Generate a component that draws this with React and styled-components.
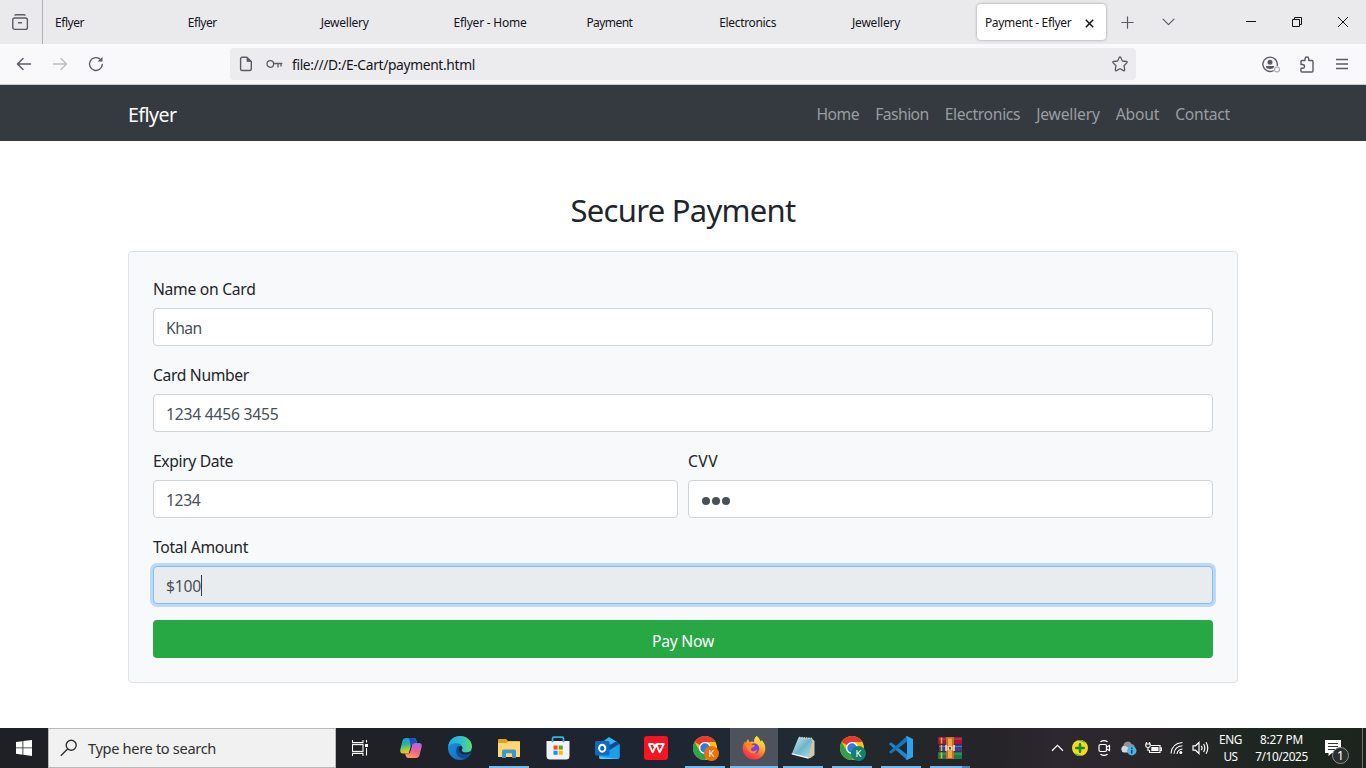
import React, { useLayoutEffect, useRef, useState } from "react";
import styled, { createGlobalStyle } from "styled-components";

const GlobalStyle = createGlobalStyle`
  *, *::before, *::after { box-sizing: border-box; }
  html, body { margin: 0; padding: 0; overflow: hidden; }
  body { background: #fff; font-family: "Noto Sans", "Open Sans", sans-serif; color: #212529; }
  svg { display: block; flex: none; }
`;

const Run = styled.span`
  display: inline-block;
  white-space: nowrap;
  flex: none;
`;

/* Tracks its text so that the run takes the given advance width. */
function Text({ w, children }) {
  const ref = useRef(null);
  const [spacing, setSpacing] = useState(0);
  useLayoutEffect(() => {
    const natural = ref.current.getBoundingClientRect().width;
    setSpacing((w - natural) / children.length);
  }, []);
  return (
    <Run ref={ref} style={{ letterSpacing: `${spacing}px` }}>
      {children}
    </Run>
  );
}

const Screen = styled.div`
  width: 1366px;
  height: 768px;
  display: flex;
  flex-direction: column;
  background: #fff;
`;

/* ---------- browser chrome ---------- */
const TabBar = styled.div`
  height: 44px;
  display: flex;
  align-items: center;
  background: #eaeaed;
  color: #15141a;
  font-size: 12px;
`;
const FirefoxView = styled.div`
  width: 43px;
  height: 44px;
  padding: 14px 0 0 12px;
  border-right: 1px solid #b1b1b5;
`;
const Tabs = styled.div`
  display: flex;
  align-items: center;
  padding-left: 4px;
  line-height: 16px;
`;
const Tab = styled.div`
  width: 132.85px;
  padding-left: 8px;
  padding-top: 2px;
`;
const ActiveTab = styled.div`
  width: 129px;
  height: 36px;
  display: flex;
  align-items: center;
  justify-content: space-between;
  padding: 2px 12px 0 8px;
  border-radius: 4px;
  background: #fff;
  box-shadow: 0 0 3px rgba(0, 0, 0, 0.35);
`;
const TabActions = styled.div`
  display: flex;
  align-items: center;
  gap: 28px;
  padding-left: 15px;
`;
const WindowButtons = styled.div`
  display: flex;
  align-items: center;
  gap: 34px;
  margin-left: auto;
  padding-right: 17px;
`;
const ToolBar = styled.div`
  height: 41px;
  display: flex;
  align-items: center;
  background: #f9f9fb;
  border-bottom: 1px solid #cccccf;
`;
const NavButtons = styled.div`
  width: 230px;
  display: flex;
  align-items: center;
  gap: 20px;
  padding-left: 16px;
`;
const AddressBar = styled.div`
  width: 906px;
  height: 32px;
  display: flex;
  align-items: center;
  padding: 0 8px;
  border-radius: 4px;
  background: #ececee;
  color: #15141a;
  font-size: 13.8px;
`;
const Url = styled.div`
  padding-top: 1px;
`;
const KeySlot = styled.div`
  padding: 0 9px 0 12px;
`;
const StarSlot = styled.div`
  margin-left: auto;
`;
const ToolActions = styled.div`
  display: flex;
  align-items: center;
  gap: 19px;
  margin-left: auto;
  padding-right: 16px;
`;

/* ---------- page ---------- */
const SiteNav = styled.nav`
  height: 56px;
  display: flex;
  align-items: center;
  justify-content: space-between;
  padding: 3px 136px 0 128px;
  background: #343a40;
`;
const Brand = styled.div`
  color: #fff;
  font-size: 19.6px;
  line-height: 30px;
`;
const Links = styled.div`
  display: flex;
  gap: 16px;
  padding-bottom: 2px;
  color: #9a9da0;
  font-size: 15.7px;
  line-height: 24px;
`;
const Main = styled.main`
  flex: 1;
  padding: 48px 128px 0;
  font-size: 15.7px;
`;
const Title = styled.h2`
  margin: 0 0 22px;
  height: 40px;
  font-size: 31px;
  font-weight: 400;
  line-height: 42px;
  text-align: center;
`;
const Card = styled.form`
  height: 432px;
  padding: 24px;
  border: 1px solid #dee2e6;
  border-radius: 4px;
  background: #f8f9fa;
`;
const FormGroup = styled.div`
  flex: 1;
  margin-bottom: 16px;
`;
const FormRow = styled.div`
  display: flex;
  gap: 10px;
`;
const Label = styled.div`
  height: 24px;
  margin-bottom: 8px;
  padding-top: 1px;
  line-height: 25px;
`;
const Field = styled.div`
  height: 38px;
  display: flex;
  align-items: center;
  padding: 1px 12px 0;
  border: 1px solid ${(p) => (p.$focused ? "#80bdff" : "#ced4da")};
  border-radius: 4px;
  background: ${(p) => (p.$focused ? "#e9ecef" : "#fff")};
  box-shadow: ${(p) => (p.$focused ? "0 0 0 3px rgba(0, 123, 255, 0.25)" : "none")};
  color: #495057;
  line-height: 24px;
`;
const Caret = styled.span`
  width: 1px;
  height: 21px;
  background: #343a40;
`;
const Dots = styled.div`
  display: flex;
  gap: 2px;
  padding: 3px 0 0 1px;
`;
const Dot = styled.span`
  width: 8px;
  height: 8px;
  border-radius: 50%;
  background: #495057;
`;
const PayButton = styled.div`
  height: 38px;
  padding-top: 9px;
  border-radius: 4px;
  background: #28a745;
  color: #fff;
  line-height: 24px;
  text-align: center;
`;

/* ---------- taskbar ---------- */
const TaskBar = styled.div`
  height: 40px;
  display: flex;
  background: linear-gradient(90deg, #1e2025 0, #1f2126 400px, #1d2533 640px, #212a33 780px, #23272a 900px, #262429 1000px, #2d2730 1060px, #29262a 1150px, #1e2621 1260px, #1c241d 1366px);
  color: #fff;
`;
const Start = styled.div`
  width: 48px;
  padding: 12px 16px;
`;
const Search = styled.div`
  width: 288px;
  display: flex;
  align-items: center;
  gap: 10px;
  padding-left: 11px;
  border: 1px solid #b9b9b9;
  background: #f1f1f1;
  color: #303030;
  font-size: 14.6px;
`;
const Apps = styled.div`
  display: flex;
  gap: 1px;
`;
const AppButton = styled.div`
  width: 48px;
  height: 40px;
  display: flex;
  flex-direction: column;
  align-items: center;
  justify-content: space-between;
  margin-left: ${(p) => (p.$first ? "2px" : "0")};
  padding-top: ${(p) => p.$top || 8}px;
  background: ${(p) => (p.$active ? "#4d525c" : "transparent")};
`;
const Underline = styled.div`
  width: ${(p) => (p.$wide ? 48 : 40)}px;
  height: 2px;
  background: ${(p) => (p.$split ? "linear-gradient(90deg, #76b9ed 32px, #4f83ad 32px)" : "#76b9ed")};
`;
const Tray = styled.div`
  display: flex;
  align-items: center;
  margin-left: auto;
  padding-right: 11px;
`;
const TrayIcons = styled.div`
  display: flex;
  align-items: center;
  gap: 8px;
  margin-right: 9px;
`;
const TrayText = styled.div`
  width: ${(p) => p.$w}px;
  display: flex;
  flex-direction: column;
  align-items: center;
  margin-right: ${(p) => p.$gap}px;
  padding-bottom: 1px;
  font-size: 11.8px;
  line-height: 17px;
`;
const Notify = styled.div`
  position: relative;
  width: 27px;
  height: 27px;
  padding: 5px 0 0 1px;
`;
const Count = styled.span`
  position: absolute;
  left: 8px;
  top: 12px;
  width: 17px;
  height: 17px;
  border: 1px solid #8d918e;
  border-radius: 50%;
  background: #2b302c;
  font-size: 13px;
  line-height: 15px;
  text-align: center;
`;
const Peek = styled.div`
  width: 4px;
  border-left: 1px solid #6f7370;
`;

const line = { fill: "none", stroke: "#5b5b66", strokeWidth: 1.4, strokeLinecap: "round", strokeLinejoin: "round" };

const ViewIcon = () => (
  <svg width="17" height="17" viewBox="0 0 17 17" {...line}>
    <path d="M3 1.2Q3.300 .8 4 .8H12Q12.700 .8 13 1.200" />
    <rect x=".8" y="4" width="14.600" height="11.400" rx="2" />
    <path d="M6.500 8.700H9.500" />
  </svg>
);
const BackIcon = () => (
  <svg width="16" height="16" viewBox="0 0 16 16" {...line} strokeWidth="1.5"><path d="M14.500 8H1.500M7 2.500L1.500 8L7 13.500" /></svg>
);
const ForwardIcon = () => (
  <svg width="16" height="16" viewBox="0 0 16 16" {...line} stroke="#bcbcc2" strokeWidth="1.5"><path d="M1.500 8H14.500M9 2.500L14.500 8L9 13.500" /></svg>
);
const ReloadIcon = () => (
  <svg width="16" height="16" viewBox="0 0 16 16" {...line}>
    <path d="M14.300 8.500A6.400 6.400 0 1 1 11.700 2.900" />
    <path d="M9.500 5.500H14.500V.9Z" fill="#5b5b66" stroke="none" />
  </svg>
);
const PageIcon = () => (
  <svg width="16" height="16" viewBox="0 0 16 16" {...line}>
    <path d="M4.200 1.300H8.800L13.300 5.600V12.700Q13.300 14.500 11.500 14.500H4.200Q2.600 14.500 2.600 12.900V2.900Q2.600 1.300 4.200 1.300Z" />
    <path d="M9 1.800V5.500H12.800Z" fill="#5b5b66" strokeWidth=".8" />
  </svg>
);
const KeyIcon = () => (
  <svg width="17" height="12" viewBox="0 0 17 12" {...line} strokeWidth="1.300">
    <circle cx="4.300" cy="6" r="3.300" /><path d="M7.700 5.500H15.800M12 6V9M15 6V8" />
  </svg>
);
const StarIcon = () => (
  <svg width="16" height="16" viewBox="0 0 16 16" {...line} strokeWidth="1.300">
    <path d="M8 .9Q8.600 .9 8.900 1.700L10.400 5L14.400 5.500Q15.700 5.800 14.800 6.900L12 9.700L12.700 13.700Q12.700 15.100 11.500 14.600L8 12.700L4.500 14.600Q3.300 15.100 3.300 13.700L4 9.700L1.200 6.900Q.3 5.800 1.600 5.500L5.600 5L7.100 1.700Q7.400 .9 8 .9Z" />
  </svg>
);
const AccountIcon = () => (
  <svg width="18" height="17" viewBox="0 0 18 17">
    <path d="M11 14.900A7.200 7.200 0 1 1 15.200 9.500" {...line} />
    <circle cx="8" cy="6.300" r="2.500" fill="#5b5b66" />
    <path d="M4 10H12Q12.500 12.700 8 13Q3.500 12.700 4 10Z" fill="#5b5b66" />
    <circle cx="15" cy="13.500" r="2.500" fill="#f9f9fb" stroke="#a9a9af" strokeWidth="1.100" />
  </svg>
);
const PuzzleIcon = () => (
  <svg width="16" height="17" viewBox="0 0 16 17" {...line}>
    <path d="M6 4.500V2.800Q6.200 1 7.900 1Q9.600 1 9.800 2.800V4.500H13Q14 4.500 14 5.500V15Q14 16 13 16H3Q2 16 2 15V12.300H3.800Q5.600 12 5.600 10.400Q5.600 8.800 3.800 8.500H2V5.500Q2 4.500 3 4.500Z" />
  </svg>
);
const MenuIcon = () => (
  <svg width="16" height="14" viewBox="0 0 16 14" {...line} strokeLinecap="butt"><path d="M2 2.500H14M2 7H14M2 11.500H14" /></svg>
);

const StartIcon = () => (
  <svg width="16" height="16" viewBox="0 0 16 16" fill="#fff">
    <path d="M0 2.100L6.500 1.200V7.500H0ZM7.300 1.100L16 0V7.500H7.300ZM0 8.300H6.500V14.700L0 13.800ZM7.300 8.300H16V16L7.300 14.800Z" />
  </svg>
);
const SearchIcon = () => (
  <svg width="18" height="18" viewBox="0 0 18 18" fill="none" stroke="#303030" strokeWidth="1.400">
    <circle cx="11.200" cy="6.300" r="5" /><path d="M7.600 9.900L.8 16.700" />
  </svg>
);
const TaskViewIcon = () => (
  <svg width="17" height="16" viewBox="0 0 17 16" fill="none" stroke="#fff" strokeWidth="1.100">
    <path d="M.5 0V2.600H11V0M.5 16V13.400H11V16M14.500 0V2.500M14.500 8V15.500" /><rect x=".5" y="4.600" width="10.500" height="6.800" />
    <rect x="13" y="4" width="3" height="3" fill="#fff" stroke="none" />
  </svg>
);
const CopilotIcon = () => (
  <svg width="24" height="24" viewBox="0 0 24 24">
    <defs>
      <linearGradient id="cpA" x1="0" y1="0" x2=".2" y2="1"><stop offset="0" stopColor="#2594e8" /><stop offset=".45" stopColor="#23b6a0" /><stop offset=".75" stopColor="#9acb3f" /><stop offset="1" stopColor="#f3c51c" /></linearGradient>
      <linearGradient id="cpB" x1=".6" y1="0" x2=".3" y2="1"><stop offset="0" stopColor="#a967ee" /><stop offset=".5" stopColor="#ef5f8f" /><stop offset="1" stopColor="#ff9c56" /></linearGradient>
    </defs>
    <path d="M7 2H14.500Q17 2 17.500 5L18 7H15.500Q13.500 7 12.800 9.500L11.400 14.500Q10.500 17.500 8 17.500H4Q.5 17.500 1.400 13L3.400 5Q4.300 2 7 2Z" fill="url(#cpA)" />
    <path d="M13 2Q16.500 2 17.500 5.500L18 7H15.500Q13.500 7 12.800 9.500L12 12L10.800 5Q10.500 2 8 2Z" fill="#1b4fc4" />
    <path d="M17 22H9.500Q7 22 6.500 19L6 17.500H8Q10.500 17.500 11.300 14.500L12.800 9.500Q13.600 7 16 7H20Q23.500 7 22.600 11L20.600 19Q19.700 22 17 22Z" fill="url(#cpB)" />
    <path d="M12.200 9L9.600 18Q11 17 11.600 14.500L13 9.500Z" fill="#1e2228" />
  </svg>
);
const EdgeIcon = () => (
  <svg width="24" height="24" viewBox="0 0 24 24">
    <defs>
      <linearGradient id="edA" x1="0" y1=".4" x2="1" y2=".4"><stop offset="0" stopColor="#2aa8e6" /><stop offset=".55" stopColor="#2dbfd0" /><stop offset="1" stopColor="#62dd62" /></linearGradient>
      <linearGradient id="edB" x1="0" y1="0" x2="1" y2="1"><stop offset="0" stopColor="#1b93e3" /><stop offset="1" stopColor="#1263b9" /></linearGradient>
    </defs>
    <circle cx="12" cy="12" r="12" fill="url(#edB)" />
    <path d="M.2 10.500C1 4 6 0 12 0C19 0 24 5 24 10.500C24 14.500 21 16.500 17.500 16.500C14 16.500 13 15 14 13.500C15 12 14.500 8.500 10.500 7.500C6 6.500 1.500 8 .2 10.500Z" fill="url(#edA)" />
    <path d="M8.500 12C6.500 17 10.500 22.500 17 22.800Q20.500 21 22.500 17.300Q17 20 13 17.500C10 15.500 10 12 12 10Q9.500 9.800 8.500 12Z" fill="#144a93" />
    <path d="M13.800 13.700C15.200 12 14 9.500 12 10C9.800 12 10 15.600 13 17.500Q17 20 22.300 17.200Q23 16 22.300 15.500Q19 17.200 15.500 16.200Q13 15 13.800 13.700Z" fill="#202733" />
    <path d="M22.300 17.200Q24 14 24 11.500L26 16L23 21Z" fill="#202733" />
  </svg>
);
const FolderIcon = () => (
  <svg width="22" height="19" viewBox="0 0 22 19">
    <path d="M0 1Q0 0 1 0H8L10 2H21Q22 2 22 3V18H0Z" fill="#e0a21b" />
    <path d="M0 4H8.500L10.500 2.500H22V17Q22 18 21 18H1Q0 18 0 17Z" fill="#fbd872" />
    <path d="M4 19V12Q4 10.500 5.500 10.500H16.500Q18 10.500 18 12V19H14V15Q14 14.300 13.300 14.300H8.700Q8 14.300 8 15V19Z" fill="#3d94d6" />
  </svg>
);
const StoreIcon = () => (
  <svg width="24" height="24" viewBox="0 0 24 24">
    <path d="M6.500 6V2.500Q6.500 1.200 7.800 1.200H16.200Q17.500 1.200 17.500 2.500V6" fill="none" stroke="#31b5ea" strokeWidth="1.700" />
    <path d="M.5 5H23.500V20Q23.500 23.500 20 23.500H4Q.5 23.500 .5 20Z" fill="#f1f2f5" />
    <path d="M6.500 5V6.300M17.500 5V6.300" stroke="#31b5ea" strokeWidth="1.700" />
    <path d="M7.500 9.500H11.600V13.600H7.500Z" fill="#f25022" /><path d="M12.700 9.500H16.800V13.600H12.700Z" fill="#64a60f" />
    <path d="M7.500 14.700H11.600V18.800H7.500Z" fill="#089ce6" /><path d="M12.700 14.700H16.800V18.800H12.700Z" fill="#ffb900" />
  </svg>
);
const OutlookIcon = () => (
  <svg width="25" height="24" viewBox="0 0 25 24">
    <path d="M4 9L14 1.300L24.500 8V21Q24.500 23 22.500 23H6Q4 23 4 21Z" fill="#28a8ea" />
    <path d="M6 7L14 1.300L22 6L12 14Z" fill="#0f6bc2" /><path d="M14 1.300L22 6L17 10L9.500 4.500Z" fill="#35b8f1" />
    <path d="M9 18L24.500 8V21Q24.500 23 22.500 23H8Z" fill="#1aa0e8" /><path d="M24.500 8L13 15V10L21 5.500Z" fill="#124795" />
    <path d="M4 21L24 23H6Q4 23 4 21Z" fill="#50d9ff" />
    <rect x="0" y="5" width="14.500" height="14.500" rx="1.500" fill="#0f6cbd" />
    <ellipse cx="7.200" cy="12.200" rx="3.100" ry="3.500" fill="none" stroke="#fff" strokeWidth="1.900" />
  </svg>
);
const WpsIcon = () => (
  <svg width="24" height="24" viewBox="0 0 24 24">
    <rect width="24" height="24" rx="3" fill="#fb1220" />
    <path d="M4.300 8H9.500M13 8H19.700L15.700 16.300L12.300 8.300L8.700 16.300L4.800 8M9.500 8L11 11.300" fill="none" stroke="#fff" strokeWidth="1.900" strokeLinejoin="round" />
  </svg>
);
const Badge = styled.span`
  position: absolute;
  left: 11px;
  top: 10px;
  width: 15px;
  height: 15px;
  border-radius: 50%;
  background: ${(p) => p.$c};
  color: #fff;
  font-size: 9.5px;
  line-height: 15px;
  text-align: center;
`;
const ChromeBox = styled.div`
  position: relative;
  width: 24px;
  height: 24px;
`;
const ChromeIcon = ({ color }) => (
  <ChromeBox>
    <svg width="24" height="24" viewBox="0 0 24 24">
      <circle cx="12" cy="12" r="12" fill="#fbc116" />
      <path d="M12 12L1.600 6A12 12 0 0 1 22.400 6H12Z" fill="#e33b2e" />
      <path d="M1.600 6A12 12 0 0 0 12 24L17.200 15L12 12L6.800 15Z" fill="#2fa24c" />
      <circle cx="12" cy="12" r="6" fill="#fff" /><circle cx="12" cy="12" r="4.700" fill="#2f7be6" />
    </svg>
    <Badge $c={color}>K</Badge>
  </ChromeBox>
);
const FirefoxIcon = () => (
  <svg width="24" height="24" viewBox="0 0 24 24">
    <defs>
      <linearGradient id="fxA" x1=".8" y1="0" x2=".2" y2="1"><stop offset="0" stopColor="#fff04a" /><stop offset=".35" stopColor="#ffb52b" /><stop offset=".65" stopColor="#ff5a36" /><stop offset="1" stopColor="#ef2260" /></linearGradient>
    </defs>
    <path d="M15 0C17 2 18 3.500 18.500 5.500L19.800 4.200C22.500 7 23.500 10 23.300 13C23 19 18 23.500 12 23.500C5.500 23.500 .7 18.500 .7 12.500C.7 9.500 1.700 7 3.300 5V7.500L6 3L7.500 6Q10 5 12.500 6C12 3.500 13 1.500 15 0Z" fill="url(#fxA)" />
    <circle cx="12" cy="12.500" r="5.200" fill="#7b3fe4" />
    <path d="M3.500 9Q5 5.500 9 6.500Q9 8 10.500 9L13 9.300Q12.500 11.500 9.800 11.800Q8 14 10 15Q13 15.800 15 13.500Q14.500 17.500 11.500 17.800Q6 17 3.500 9Z" fill="#ff8a28" />
    <path d="M12.500 6Q17 6.500 18.500 12Q18.500 9 16.500 6Q14.500 3 15 0Q11.500 2.500 12.500 6Z" fill="#ffdc3a" />
  </svg>
);
const NotepadIcon = () => (
  <svg width="24" height="24" viewBox="0 0 24 24">
    <defs><linearGradient id="npA" x1="0" y1="0" x2="1" y2="1"><stop offset="0" stopColor="#cdeff7" /><stop offset=".5" stopColor="#6fb4c9" /><stop offset="1" stopColor="#b9dfe8" /></linearGradient></defs>
    <path d="M21 2.500L23.500 5V19L19.500 22L17 22.500Z" fill="#cfc7b0" />
    <path d="M7.500 1.500L21.500 2.500L17.500 22.300L1 17.500Z" fill="url(#npA)" />
    <path d="M.6 17L17.500 21.300L17.300 22.800L.8 18.500Z" fill="#eef6f8" />
    <path d="M8 1.500L21.500 2.500" stroke="#d8d8d8" strokeWidth="1.500" strokeDasharray="1.500 .8" />
  </svg>
);
const CodeIcon = () => (
  <svg width="24" height="24" viewBox="0 0 24 24">
    <path d="M0 8L2 6.300L18 18.500V23.500L17 23Z" fill="#2086cb" /><path d="M0 16L2 17.700L18 5.500V.5L17 1Z" fill="#1478c0" />
    <path d="M18 0L24 3V21L18 24L16.500 23Q18 23 18 21V3Q18 1 16.500 1Z" fill="#2ba4ee" />
  </svg>
);
const RarIcon = () => (
  <svg width="24" height="22" viewBox="0 0 24 22">
    <rect y="0" width="24" height="7" fill="#a3163c" /><rect x="1" y="7.500" width="23" height="7" fill="#403d90" /><rect y="15" width="24" height="7" fill="#1c7a43" />
    <path d="M1 2H24" stroke="#e88aa0" strokeWidth=".8" opacity=".6" /><path d="M1 9.500H24" stroke="#9a97da" strokeWidth=".8" opacity=".6" /><path d="M1 17H24" stroke="#7cc795" strokeWidth=".8" opacity=".6" />
    <path d="M3.500 .5V6.500M3.500 8V14M3.500 15.500V21.500" stroke="#e1bb2e" strokeWidth="1.500" />
    <rect x="8" width="8" height="22" fill="#c66d24" /><path d="M12 1.500V9M12 14V21" stroke="#f4a63c" strokeWidth="4" />
    <path d="M8 8V14M16 8V14" stroke="#eceadf" strokeWidth="1.500" /><rect x="9.500" y="9" width="5" height="4.500" fill="#ecdcae" /><rect x="11" y="10" width="2" height="2.500" fill="#7b4b20" />
  </svg>
);

const ShieldIcon = () => (
  <svg width="16" height="16" viewBox="0 0 16 16"><circle cx="8" cy="8" r="8" fill="#f6da1f" /><path d="M5 .6A8 8 0 0 1 14.500 3.500Q11 1.500 5 .6ZM11 15.400A8 8 0 0 1 1.500 12.500Q5 14.500 11 15.400Z" fill="#5cb335" /><path d="M8 4.200V11.800M4.200 8H11.800" stroke="#178c30" strokeWidth="2.600" strokeLinecap="round" /></svg>
);
const MeetIcon = () => (
  <svg width="16" height="18" viewBox="0 0 16 18" fill="none" stroke="#fff" strokeWidth="1.200"><path d="M4.500 2.800Q8 .5 11.500 2.800M4.500 15.200Q8 17.500 11.500 15.200" /><rect x="3" y="5.500" width="7.500" height="7" rx="1.500" /><path d="M10.500 8L13.500 6.500V11.500L10.500 10" /></svg>
);
const CloudIcon = () => (
  <svg width="17" height="16" viewBox="0 0 17 16"><path d="M4 11.500A3.200 3.200 0 0 1 3.500 5.500A4.200 4.200 0 0 1 11.500 4Q15 4.500 14.500 8V11Z" fill="#929294" /><path d="M4 12.500A3.400 3.400 0 0 1 3.500 6Q8 5.500 11 11.500L8 12.500Z" fill="#d6d6d8" /><circle cx="11.800" cy="10.800" r="4.700" fill="#45b4f0" /><path d="M11.800 9.800V13.500M11.800 7.500V8.900" stroke="#10344c" strokeWidth="1.400" /></svg>
);
const BatteryIcon = () => (
  <svg width="17" height="14" viewBox="0 0 17 14" fill="none" stroke="#fff" strokeWidth="1.200"><path d="M6 4.500H15V11.500H4.500V9M15 7H16.500V9.500H15M1.500 1V3M4.500 1V3M.8 3H5.200V5Q5 6.500 3 6.500Q1 6.500 .8 5ZM3 6.500V10" /><rect x="6.300" y="6" width="7.200" height="4" fill="#fff" stroke="none" /></svg>
);
const WifiIcon = () => (
  <svg width="14" height="14" viewBox="0 0 14 14" fill="none" stroke="#fff" strokeWidth="1.100"><path d="M1 12.500Q1.500 2.500 12.500 1.500M4 12.800Q4.500 5.500 12.500 4.800M7 13Q7.500 8.500 12.500 8" /><circle cx="10.800" cy="11.500" r="1.500" fill="#fff" stroke="none" /></svg>
);
const SpeakerIcon = () => (
  <svg width="18" height="14" viewBox="0 0 18 14" fill="none" stroke="#fff" strokeWidth="1.200"><path d="M1 4.800H3.500L7 1.500V12.500L3.500 9.200H1ZM9.300 4.800Q10.800 7 9.300 9.200M11.600 3Q14 7 11.600 11M14 1.300Q17.500 7 14 12.700" /></svg>
);

const tabs = [["Eflyer", 29], ["Eflyer", 29], ["Jewellery", 48], ["Eflyer - Home", 73], ["Payment", 46], ["Electronics", 57], ["Jewellery", 48]];
const links = [["Home", 42.800], ["Fashion", 53.500], ["Electronics", 75.500], ["Jewellery", 63.500], ["About", 43.500], ["Contact", 54.800]];
const apps = [
  { icon: <CopilotIcon /> },
  { icon: <EdgeIcon /> },
  { icon: <FolderIcon />, top: 11, open: true },
  { icon: <StoreIcon /> },
  { icon: <OutlookIcon /> },
  { icon: <WpsIcon /> },
  { icon: <ChromeIcon color="#e8710a" />, open: true },
  { icon: <FirefoxIcon />, open: true, active: true },
  { icon: <NotepadIcon />, open: true },
  { icon: <ChromeIcon color="#12806f" />, open: true },
  { icon: <CodeIcon />, open: true },
  { icon: <RarIcon />, top: 9, open: true, split: true },
];

function BrowserChrome() {
  return (
    <>
      <TabBar>
        <FirefoxView><ViewIcon /></FirefoxView>
        <Tabs>
          {tabs.map(([t, w], i) => <Tab key={i}><Text w={w}>{t}</Text></Tab>)}
          <ActiveTab>
            <Text w={86.500}>Payment - Eflyer</Text>
            <svg width="9" height="9" viewBox="0 0 9 9" stroke="#15141a" strokeWidth="1.500"><path d="M.8 .8L8.200 8.200M8.200 .8L.8 8.200" /></svg>
          </ActiveTab>
        </Tabs>
        <TabActions>
          <svg width="13" height="13" viewBox="0 0 13 13" {...line} strokeWidth="1.200"><path d="M.8 6.500H12.200M6.500 .8V12.200" /></svg>
          <svg width="13" height="8" viewBox="0 0 13 8" {...line} strokeWidth="1.200"><path d="M1 1.200L6.500 6.700L12 1.200" /></svg>
        </TabActions>
        <WindowButtons>
          <svg width="12" height="10" viewBox="0 0 12 10" stroke="#111"><path d="M1 4.500H11" /></svg>
          <svg width="12" height="12" viewBox="0 0 12 12" fill="none" stroke="#111"><path d="M1.500 3.500H8.500V10.500H1.500ZM3.500 3.500V1.500H10.500V8.500H8.500" /></svg>
          <svg width="12" height="12" viewBox="0 0 12 12" stroke="#111"><path d="M1 1L11 11M11 1L1 11" /></svg>
        </WindowButtons>
      </TabBar>
      <ToolBar>
        <NavButtons><BackIcon /><ForwardIcon /><ReloadIcon /></NavButtons>
        <AddressBar>
          <PageIcon />
          <KeySlot><KeyIcon /></KeySlot>
          <Url><Text w={183}>file:///D:/E-Cart/payment.html</Text></Url>
          <StarSlot><StarIcon /></StarSlot>
        </AddressBar>
        <ToolActions><AccountIcon /><PuzzleIcon /><MenuIcon /></ToolActions>
      </ToolBar>
    </>
  );
}

function PaymentPage() {
  return (
    <>
      <SiteNav>
        <Brand><Text w={48.500}>Eflyer</Text></Brand>
        <Links>{links.map(([t, w]) => <Text key={t} w={w}>{t}</Text>)}</Links>
      </SiteNav>
      <Main>
        <Title><Text w={225}>Secure Payment</Text></Title>
        <Card>
          <FormGroup><Label><Text w={102.500}>Name on Card</Text></Label><Field><Text w={35.700}>Khan</Text></Field></FormGroup>
          <FormGroup><Label><Text w={96}>Card Number</Text></Label><Field><Text w={112.500}>1234 4456 3455</Text></Field></FormGroup>
          <FormRow>
            <FormGroup><Label><Text w={80}>Expiry Date</Text></Label><Field><Text w={34.500}>1234</Text></Field></FormGroup>
            <FormGroup><Label><Text w={30}>CVV</Text></Label><Field><Dots><Dot /><Dot /><Dot /></Dots></Field></FormGroup>
          </FormRow>
          <FormGroup><Label><Text w={95}>Total Amount</Text></Label><Field $focused><Text w={35}>$100</Text><Caret /></Field></FormGroup>
          <PayButton><Text w={62}>Pay Now</Text></PayButton>
        </Card>
      </Main>
    </>
  );
}

function WindowsTaskbar() {
  return (
    <TaskBar>
      <Start><StartIcon /></Start>
      <Search><SearchIcon /><Text w={128}>Type here to search</Text></Search>
      <Apps>
        <AppButton $top={12}><TaskViewIcon /></AppButton>
        {apps.map((a, i) => (
          <AppButton key={i} $first={i === 0} $top={a.top} $active={a.active}>
            {a.icon}
            {a.open && <Underline $wide={a.active} $split={a.split} />}
          </AppButton>
        ))}
      </Apps>
      <Tray>
        <TrayIcons>
          <svg width="13" height="8" viewBox="0 0 13 8" fill="none" stroke="#fff" strokeWidth="1.300"><path d="M1 6.800L6.500 1.300L12 6.800" /></svg>
          <ShieldIcon /><MeetIcon /><CloudIcon /><BatteryIcon /><WifiIcon /><SpeakerIcon />
        </TrayIcons>
        <TrayText $w={23} $gap={13}><Text w={23}>ENG</Text><Text w={14}>US</Text></TrayText>
        <TrayText $w={53} $gap={16}><Text w={43}>8:27 PM</Text><Text w={52.500}>7/10/2025</Text></TrayText>
        <Notify>
          <svg width="18" height="18" viewBox="0 0 18 18"><path d="M0 0H16V13H7L3.500 16V13H0Z" fill="#fff" /><path d="M3 3.500H13M3 6.500H13M3 9.500H10" stroke="#303530" /></svg>
          <Count>1</Count>
        </Notify>
      </Tray>
      <Peek />
    </TaskBar>
  );
}

export default function App() {
  return (
    <Screen>
      <GlobalStyle />
      <BrowserChrome />
      <PaymentPage />
      <WindowsTaskbar />
    </Screen>
  );
}
